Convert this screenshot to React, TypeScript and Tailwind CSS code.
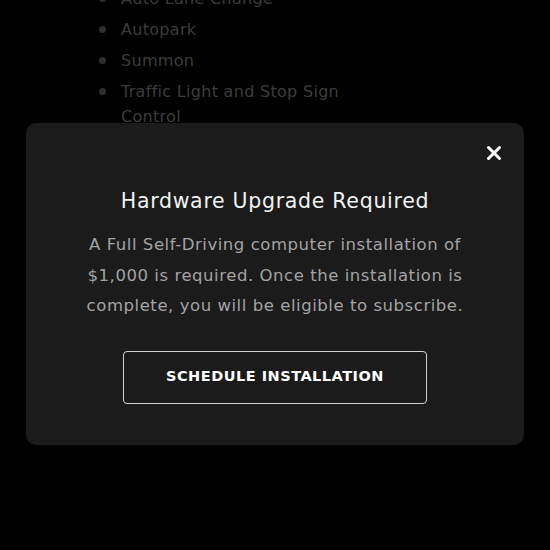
import { X } from "lucide-react";

const features = ["Auto Lane Change", "Autopark", "Summon", "Traffic Light and Stop Sign Control"];

const App = () => {
  return (
    <div
      className="relative w-[550px] h-[550px] overflow-hidden bg-black"
      style={{ fontFamily: '"DejaVu Sans", sans-serif' }}
    >
      {/* features list behind the dialog */}
      <ul className="mt-[-14px] ml-[99px] w-[250px] flex flex-col gap-[6px] text-[16px] leading-[25px] tracking-[0.3px] text-[#3c3c3c]">
        {features.map((f) => (
          <li key={f} className="flex gap-[15px]">
            <span className="mt-[9px] w-[7px] h-[7px] rounded-full bg-[#2e2e2e] shrink-0" />
            <span>{f}</span>
          </li>
        ))}
      </ul>

      <div className="absolute left-[26px] top-[123px] w-[498px] h-[322px] rounded-[10px] bg-[#1b1b1b] flex flex-col items-center">
        <div className="w-full flex justify-end pt-[19px] pr-[19px]">
          <button className="w-[22px] h-[22px] flex items-center justify-center text-white">
            <X size={24} strokeWidth={3.2} />
          </button>
        </div>
        <h2 className="mt-[23px] text-[20.5px] leading-[28px] tracking-[0.7px] text-[#f2f2f2]">
          Hardware Upgrade Required
        </h2>
        <p className="mt-[15px] w-[390px] text-center text-[16.5px] leading-[30.5px] tracking-[0.55px] text-[#a3a3a3]">
          A Full Self-Driving computer installation of $1,000 is required. Once the installation is
          complete, you will be eligible to subscribe.
        </p>
        <button className="mt-[29px] w-[304px] h-[53px] rounded-[4px] border-[1.5px] border-[#d0d0d0] text-white text-[14.5px] font-bold tracking-[0.5px]">
          SCHEDULE INSTALLATION
        </button>
      </div>
    </div>
  );
};

export default App;
